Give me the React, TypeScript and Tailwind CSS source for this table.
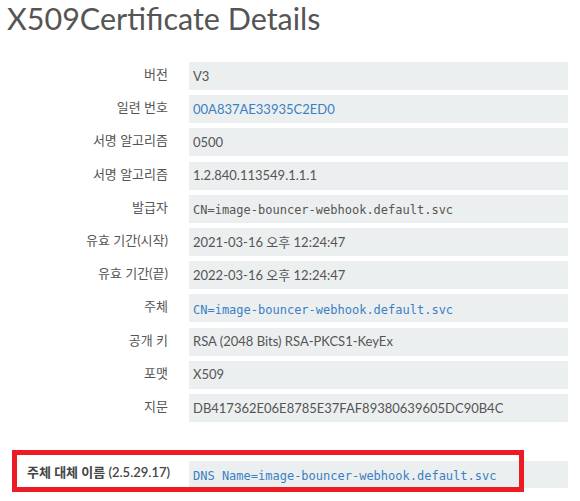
import React from "react";

type Row = { label: string; value: string; mono?: boolean; blue?: boolean };

const rows: Row[] = [
  { label: "버전", value: "V3" },
  { label: "일련 번호", value: "00A837AE33935C2ED0", blue: true },
  { label: "서명 알고리즘", value: "0500" },
  { label: "서명 알고리즘", value: "1.2.840.113549.1.1.1" },
  { label: "발급자", value: "CN=image-bouncer-webhook.default.svc", mono: true },
  { label: "유효 기간(시작)", value: "2021-03-16 오후 12:24:47" },
  { label: "유효 기간(끝)", value: "2022-03-16 오후 12:24:47" },
  { label: "주체", value: "CN=image-bouncer-webhook.default.svc", mono: true, blue: true },
  { label: "공개 키", value: "RSA (2048 Bits) RSA-PKCS1-KeyEx" },
  { label: "포맷", value: "X509" },
  { label: "지문", value: "DB417362E06E8785E37FAF89380639605DC90B4C" },
];

const sans = "font-['Lato','Noto_Sans_CJK_KR',sans-serif]";

export default function App() {
  return (
    <div className={`w-[580px] h-[501px] bg-white overflow-hidden ${sans} text-[#555]`}>
      <h1 className="pl-[7px] text-[30.5px] leading-[36px] font-normal text-[#555] font-['Lato',sans-serif]">
        X509Certificate Details
      </h1>
      <div className="mt-[26px] flex flex-col gap-[5.2px]">
        {rows.map((r, i) => (
          <div key={i} className="flex items-start">
            <div className="w-[168px] shrink-0 text-right text-[13px] leading-[20px] pt-[2px]">
              {r.label}
            </div>
            <div className="ml-[21px] w-[379px] h-[28px] bg-[#ecefef] flex items-center pl-[4px]">
              <span
                className={
                  (r.mono
                    ? "font-['DejaVu_Sans_Mono',monospace] text-[12px] pt-[3px] "
                    : "text-[13px] pt-[1px] ") + (r.blue ? "text-[#3a7fc4]" : "text-[#555]")
                }
              >
                {r.value}
              </span>
            </div>
          </div>
        ))}
      </div>
      <div className="relative mt-[39px] flex items-start">
        <div className="w-[189px] shrink-0 pl-[27px] text-[13px] leading-[20px] font-semibold text-[#444] pt-[1px]">
          주체 대체 이름 (2.5.29.17)
        </div>
        <div className="w-[379px] h-[27px] bg-[#ecefef] flex items-center pl-[4px]">
          <span className="font-['DejaVu_Sans_Mono',monospace] text-[12px] pt-[3px] text-[#3a7fc4]">
            DNS Name=image-bouncer-webhook.default.svc
          </span>
        </div>
        <div className="absolute left-[12px] top-[-11px] w-[512px] h-[42px] border-[5px] border-[#ed1c24]" />
      </div>
    </div>
  );
}
